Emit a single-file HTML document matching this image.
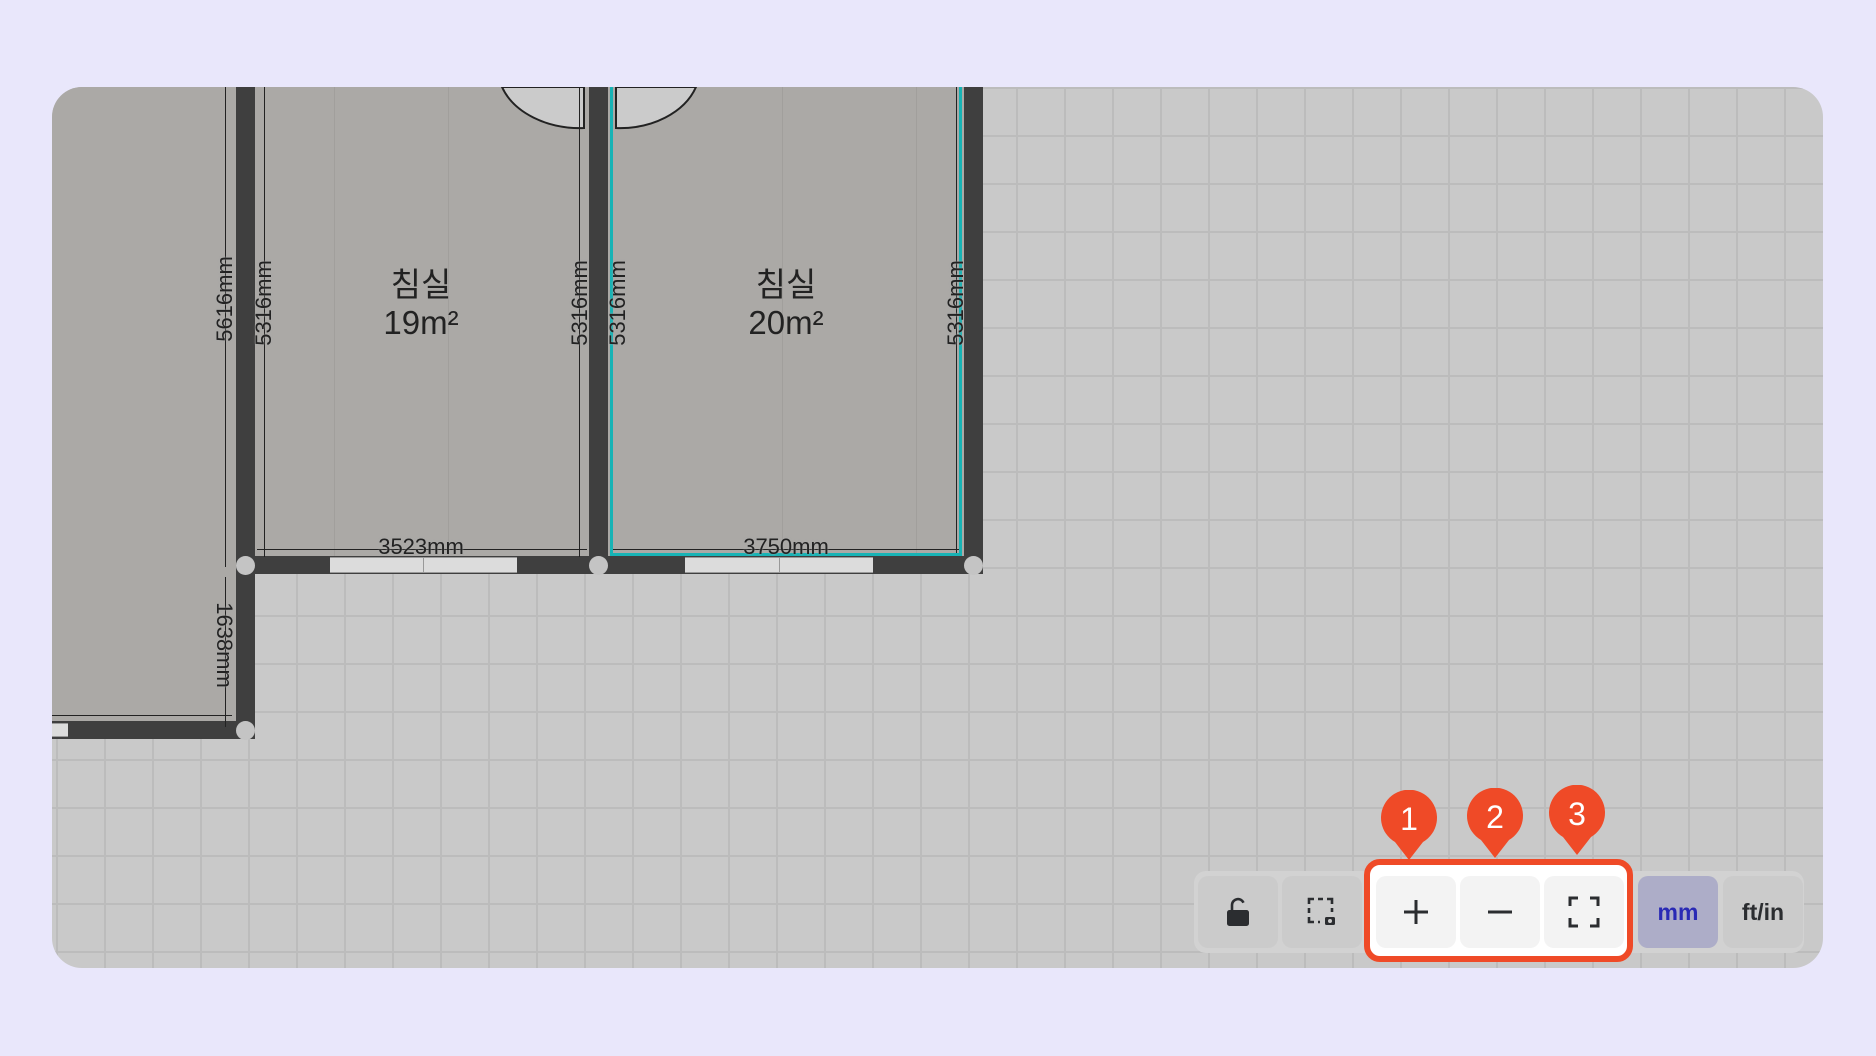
<!DOCTYPE html>
<html><head><meta charset="utf-8"><style>
*{margin:0;padding:0;box-sizing:border-box}
body{width:1876px;height:1056px;background:#e9e7fb;position:relative;overflow:hidden;font-family:"Liberation Sans","Noto Sans CJK KR",sans-serif}
#card{position:absolute;left:52px;top:87px;width:1771px;height:881px;border-radius:30px;overflow:hidden;
background-color:#c9c9c9;
background-image:linear-gradient(to right,#bcbcbc 0,#bcbcbc 2px,transparent 2px),linear-gradient(to bottom,#bcbcbc 0,#bcbcbc 2px,transparent 2px);
background-size:48px 48px;background-position:4px 0px}
.a{position:absolute}
.floor{background:#aba9a6}
.wall{background:#3f3f3f}
.win{background:#dcdcdc;border-top:1px solid #999;border-bottom:1px solid #999}
.ln{background:#222}
.dim{position:absolute;font-size:22px;color:#222;white-space:nowrap;text-shadow:0 0 2px #aaa}
.lbl{position:absolute;font-size:33px;color:#222;text-align:center;width:180px;line-height:38px}
.dot{position:absolute;width:19px;height:19px;border-radius:50%;background:#c4c4c4}
#tb{position:absolute;left:1194px;top:871px;width:610px;height:82px;background:#d2d2d2;border-radius:12px}
.btn{position:absolute;top:876px;height:72px;width:80px;border-radius:10px;background:#cbcbcb;display:flex;align-items:center;justify-content:center}
#red{position:absolute;left:1364px;top:859px;width:269px;height:103px;border:6px solid #ef4a27;border-radius:16px;background:#fff}
.pin{position:absolute;width:56px;height:70px}
</style></head><body>
<div id="card">
 <div class="a floor" style="left:0;top:0;width:190px;height:636px"></div>
 <div class="a floor" style="left:200px;top:0;width:720px;height:475px"></div>
 <div class="a" style="left:282px;top:0;width:1px;height:470px;background:#a19f9c"></div>
 <div class="a" style="left:396px;top:0;width:1px;height:470px;background:#a19f9c"></div>
 <div class="a" style="left:730px;top:0;width:1px;height:470px;background:#a19f9c"></div>
 <div class="a" style="left:864px;top:0;width:1px;height:470px;background:#a19f9c"></div>
 <svg class="a" style="left:0;top:0" width="1000" height="200">
  <path d="M450 0 A82 60 0 0 0 532 41 L532 0 Z" fill="#cbcbcb" stroke="#222" stroke-width="2"/>
  <path d="M564 0 L564 41 A80 60 0 0 0 644 0 Z" fill="#cbcbcb" stroke="#222" stroke-width="2"/>
 </svg>
 <div class="a wall" style="left:184px;top:0;width:19px;height:652px"></div>
 <div class="a wall" style="left:537px;top:0;width:19px;height:487px"></div>
 <div class="a wall" style="left:912px;top:0;width:19px;height:487px"></div>
 <div class="a wall" style="left:184px;top:469px;width:747px;height:18px"></div>
 <div class="a wall" style="left:0;top:634px;width:203px;height:18px"></div>
 <div class="a win" style="left:278px;top:470px;width:187px;height:16px"></div>
 <div class="a win" style="left:633px;top:470px;width:188px;height:16px"></div>
 <div class="a" style="left:371px;top:470px;width:1px;height:16px;background:#999"></div>
 <div class="a" style="left:727px;top:470px;width:1px;height:16px;background:#999"></div>
 <div class="a win" style="left:0;top:636px;width:16px;height:14px"></div>
 <div class="a ln" style="left:173px;top:0;width:1px;height:480px"></div>
 <div class="a ln" style="left:173px;top:490px;width:1px;height:150px"></div>
 <div class="a ln" style="left:0;top:628px;width:180px;height:1px"></div>
 <div class="a ln" style="left:212px;top:0;width:1px;height:470px"></div>
 <div class="a ln" style="left:527px;top:0;width:1px;height:470px"></div>
 <div class="a ln" style="left:205px;top:462px;width:330px;height:1px"></div>
 <div class="a ln" style="left:558px;top:462px;width:350px;height:1px"></div>
 <div class="a" style="left:558px;top:0;width:352px;height:469px;border:3px solid #17b3b5;border-top:none"></div>
 <div class="a ln" style="left:904px;top:0;width:1px;height:466px"></div>
 <div class="dot" style="left:184px;top:469px"></div>
 <div class="dot" style="left:537px;top:469px"></div>
 <div class="dot" style="left:912px;top:469px"></div>
 <div class="dot" style="left:184px;top:634px"></div>
 <div class="dim" style="left:173px;top:212px;transform:translate(-50%,-50%) rotate(-90deg)">5616mm</div>
 <div class="dim" style="left:212px;top:216px;transform:translate(-50%,-50%) rotate(-90deg)">5316mm</div>
 <div class="dim" style="left:528px;top:216px;transform:translate(-50%,-50%) rotate(-90deg)">5316mm</div>
 <div class="dim" style="left:566px;top:216px;transform:translate(-50%,-50%) rotate(-90deg)">5316mm</div>
 <div class="dim" style="left:904px;top:216px;transform:translate(-50%,-50%) rotate(-90deg)">5316mm</div>
 <div class="dim" style="left:172px;top:558px;transform:translate(-50%,-50%) rotate(90deg)">1638mm</div>
 <div class="dim" style="left:369px;top:460px;transform:translate(-50%,-50%)">3523mm</div>
 <div class="dim" style="left:734px;top:460px;transform:translate(-50%,-50%)">3750mm</div>
 <div class="lbl" style="left:279px;top:179px">침실<br>19m²</div>
 <div class="lbl" style="left:644px;top:179px">침실<br>20m²</div>
</div>

<div id="tb"></div>
<div class="btn" style="left:1198px"><svg width="26" height="30" viewBox="0 0 26 30"><path d="M7 13V8a6 6 0 0 1 11.5-2.3" fill="none" stroke="#2b2d30" stroke-width="2.6"/><rect x="2" y="13" width="22" height="16" rx="2.5" fill="#2b2d30"/></svg></div>
<div class="btn" style="left:1282px"><svg width="32" height="32" viewBox="0 0 32 32" fill="none" stroke="#2b2d30" stroke-width="2.6"><path d="M3 8V3h5M12 3h5M21 3h5v5M26 12v4M3 12v5M3 21v5h5M12 26h2"/><rect x="19" y="21" width="10" height="8" rx="1.5" fill="#2b2d30" stroke="none"/><circle cx="24" cy="25" r="2" fill="#cbcbcb" stroke="none"/></svg></div>
<div id="red"></div>
<div class="btn" style="left:1376px;background:#f3f3f3"><svg width="28" height="28"><path d="M14 2v24M2 14h24" stroke="#2b2d30" stroke-width="3"/></svg></div>
<div class="btn" style="left:1460px;background:#f3f3f3"><svg width="28" height="28"><path d="M2 14h24" stroke="#2b2d30" stroke-width="3"/></svg></div>
<div class="btn" style="left:1544px;background:#f3f3f3"><svg width="32" height="32" fill="none" stroke="#2b2d30" stroke-width="3"><path d="M2 10V2h8M22 2h8v8M30 22v8h-8M10 30H2v-8"/></svg></div>
<div class="btn" style="left:1638px;background:#adadc8;font-weight:bold;font-size:23px;color:#2a2ab5">mm</div>
<div class="btn" style="left:1723px;font-weight:bold;font-size:23px;color:#2b2d30">ft/in</div>

<svg class="pin" style="left:1381px;top:790px" viewBox="0 0 56 70"><path d="M28 70 L14 52 A28 28 0 1 1 42 52 Z" fill="#ef4a27"/><text x="28" y="40" text-anchor="middle" font-size="32" fill="#fff" font-family="Liberation Sans">1</text></svg>
<svg class="pin" style="left:1467px;top:788px" viewBox="0 0 56 70"><path d="M28 70 L14 52 A28 28 0 1 1 42 52 Z" fill="#ef4a27"/><text x="28" y="40" text-anchor="middle" font-size="32" fill="#fff" font-family="Liberation Sans">2</text></svg>
<svg class="pin" style="left:1549px;top:785px" viewBox="0 0 56 70"><path d="M28 70 L14 52 A28 28 0 1 1 42 52 Z" fill="#ef4a27"/><text x="28" y="40" text-anchor="middle" font-size="32" fill="#fff" font-family="Liberation Sans">3</text></svg>
</body></html>
